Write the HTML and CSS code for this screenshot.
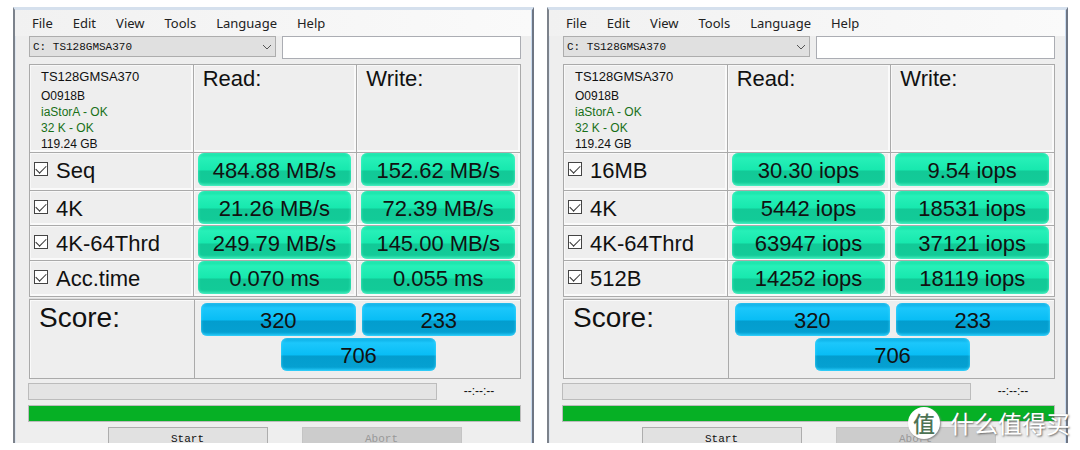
FILE: index.html
```html
<!DOCTYPE html>
<html lang="en">
<head>
<meta charset="utf-8">
<title>AS SSD Benchmark</title>
<link rel="stylesheet" href="styles.css">
</head>
<body>
<main class="screens">
  <section class="window">
    <nav class="menu">
      <button>File</button><button>Edit</button><button>View</button><button>Tools</button><button>Language</button><button>Help</button>
    </nav>
    <div class="content">
      <div class="toolbar">
        <div class="picker">
          <select aria-label="Drive"><option>C: TS128GMSA370</option></select>
          <svg viewBox="0 0 10 6"><path d="M1 1l4 4 4-4"/></svg>
        </div>
        <input class="note" type="text" aria-label="Note">
      </div>
      <table class="results">
        <thead>
          <tr>
            <td class="drive"><div class="model">TS128GMSA370</div><div>O0918B</div><div class="ok">iaStorA - OK</div><div class="ok">32 K - OK</div><div>119.24 GB</div></td>
            <th scope="col">Read:</th>
            <th scope="col">Write:</th>
          </tr>
        </thead>
        <tbody>
          <tr class="first"><td><label><input type="checkbox" checked>Seq</label></td><td><span class="pill">484.88 MB/s</span></td><td><span class="pill">152.62 MB/s</span></td></tr>
          <tr><td><label><input type="checkbox" checked>4K</label></td><td><span class="pill">21.26 MB/s</span></td><td><span class="pill">72.39 MB/s</span></td></tr>
          <tr><td><label><input type="checkbox" checked>4K-64Thrd</label></td><td><span class="pill">249.79 MB/s</span></td><td><span class="pill">145.00 MB/s</span></td></tr>
          <tr class="last"><td><label><input type="checkbox" checked>Acc.time</label></td><td><span class="pill">0.070 ms</span></td><td><span class="pill">0.055 ms</span></td></tr>
        </tbody>
      </table>
      <div class="score">
        <h2>Score:</h2>
        <div class="totals"><span class="pill blue">320</span><span class="pill blue">233</span><span class="pill blue overall">706</span></div>
      </div>
      <div class="timing"><progress value="0" max="100" aria-label="Test progress"></progress><span class="clock">--:--:--</span></div>
      <progress class="total" value="100" max="100" aria-label="Total progress"></progress>
      <div class="actions"><button>Start</button><button disabled>Abort</button></div>
    </div>
  </section>

  <section class="window">
    <nav class="menu">
      <button>File</button><button>Edit</button><button>View</button><button>Tools</button><button>Language</button><button>Help</button>
    </nav>
    <div class="content">
      <div class="toolbar">
        <div class="picker">
          <select aria-label="Drive"><option>C: TS128GMSA370</option></select>
          <svg viewBox="0 0 10 6"><path d="M1 1l4 4 4-4"/></svg>
        </div>
        <input class="note" type="text" aria-label="Note">
      </div>
      <table class="results">
        <thead>
          <tr>
            <td class="drive"><div class="model">TS128GMSA370</div><div>O0918B</div><div class="ok">iaStorA - OK</div><div class="ok">32 K - OK</div><div>119.24 GB</div></td>
            <th scope="col">Read:</th>
            <th scope="col">Write:</th>
          </tr>
        </thead>
        <tbody>
          <tr class="first"><td><label><input type="checkbox" checked>16MB</label></td><td><span class="pill">30.30 iops</span></td><td><span class="pill">9.54 iops</span></td></tr>
          <tr><td><label><input type="checkbox" checked>4K</label></td><td><span class="pill">5442 iops</span></td><td><span class="pill">18531 iops</span></td></tr>
          <tr><td><label><input type="checkbox" checked>4K-64Thrd</label></td><td><span class="pill">63947 iops</span></td><td><span class="pill">37121 iops</span></td></tr>
          <tr class="last"><td><label><input type="checkbox" checked>512B</label></td><td><span class="pill">14252 iops</span></td><td><span class="pill">18119 iops</span></td></tr>
        </tbody>
      </table>
      <div class="score">
        <h2>Score:</h2>
        <div class="totals"><span class="pill blue">320</span><span class="pill blue">233</span><span class="pill blue overall">706</span></div>
      </div>
      <div class="timing"><progress value="0" max="100" aria-label="Test progress"></progress><span class="clock">--:--:--</span></div>
      <progress class="total" value="100" max="100" aria-label="Total progress"></progress>
      <div class="actions"><button>Start</button><button disabled>Abort</button></div>
    </div>
  </section>
  <div class="watermark" lang="zh-CN"><span class="badge">值</span><span>什么值得买</span></div>
</main>
</body>
</html>
```

FILE: styles.css
```css
* { box-sizing: border-box; }

body {
  margin: 0;
  background: #fff;
  color: #111;
  font-family: "Liberation Sans", Arial, sans-serif;
}

.screens {
  position: relative;
  display: grid;
  grid-template-columns: 1fr 1fr;
  gap: 13px;
  padding: 7px 12px 8px 13px;
}

.window {
  min-width: 0;
  background: #eee;
  border-top: 3px solid #d5e0ed;
  border-left: 2px solid #7c828b;
  border-right: 2px solid #6e7684;
  box-shadow: inset -1px 0 #cbdcf0, inset 1px 0 #dfe6ef;
}

.menu {
  display: flex;
  gap: 20px;
  height: 26px;
  margin-right: 1px;
  padding-left: 17px;
  background: linear-gradient(to right, #f1f1f1, #fafafa);
}

.menu button {
  padding: 0;
  border: 0;
  background: none;
  color: #222;
  font: 13px/26px "Noto Sans", "Open Sans", sans-serif;
}

.content { padding: 0 11px 0 13px; }

.toolbar {
  display: flex;
  align-items: flex-start;
  gap: 6px;
  padding-left: 1px;
}

.picker { position: relative; flex: 248; }

.picker select {
  display: block;
  width: 100%;
  height: 21px;
  padding: 0 3px;
  border: 1px solid #adadad;
  border-radius: 0;
  appearance: none;
  background: #e0e0e0;
  color: #111;
  font: 11px "Liberation Mono", monospace;
}

.picker svg {
  position: absolute;
  right: 4px;
  top: 8px;
  width: 10px;
  height: 6px;
  fill: none;
  stroke: #555;
  pointer-events: none;
}

.note {
  flex: 238;
  min-width: 0;
  height: 23px;
  padding: 0;
  border: 1px solid #abadb3;
  background: #fff;
}

.results {
  width: calc(100% - 1px);
  margin: 5px 0 0 1px;
  table-layout: fixed;
  border-collapse: separate;
  border-spacing: 0;
  border-right: 1px solid #aaa;
  border-bottom: 1px solid #aaa;
}

.results td, .results th {
  height: 35px;
  padding: 0;
  border-top: 1px solid #aaa;
  border-left: 1px solid #aaa;
  box-shadow: inset 1px 1px #f8f8f8, inset -2px -2px #fafafa;
  vertical-align: top;
}

.results thead td, .results th { height: 87px; }
.results .first td { height: 38px; }
.results .last td { height: 36px; }

.results th {
  padding: 1px 0 0 9px;
  font-size: 22px;
  font-weight: 400;
  line-height: 26px;
  text-align: left;
}

.results .drive {
  padding: 4px 0 0 11px;
  font-size: 12px;
  line-height: 15px;
}

.drive div { line-height: 16px; }

.drive .model {
  padding-bottom: 3px;
  font-size: 13px;
}

.ok { color: #187018; }

.results label {
  display: flex;
  align-items: center;
  gap: 8px;
  height: 34px;
  padding: 1px 0 0 4px;
  font-size: 22px;
  line-height: 34px;
}

.results input {
  display: grid;
  place-items: center;
  width: 14px;
  height: 14px;
  margin: 0 0 3px;
  border: 1px solid #444;
  appearance: none;
  background: #fff;
}

.results input:checked::before {
  content: "";
  width: 9px;
  height: 5px;
  margin-bottom: 3px;
  border: solid #333;
  border-width: 0 0 1px 1px;
  rotate: -45deg;
}

.pill {
  display: block;
  height: 33px;
  margin: 0 5px 0 4px;
  border-radius: 6px;
  background: linear-gradient(#12dfa4, #27f0b8 15%, #17e8ae 52%, #12c997 54%, #12cb98 88%, #3ee8b7);
  box-shadow: inset 0 0 3px #52f7cb;
  font-size: 22px;
  line-height: 36px;
  text-align: center;
}

.pill.blue {
  margin: 0;
  background: linear-gradient(#09a8df, #1cc7fb 15%, #08bdf5 52%, #039dce 54%, #05a0d1 88%, #22c8f8);
  box-shadow: inset 0 0 3px #4bd9ff;
}

.score {
  display: grid;
  grid-template-columns: 164px 1fr;
  height: 80px;
  margin: 2px 0 0 1px;
  border: 1px solid #aaa;
  box-shadow: inset 1px 1px #fafafa, 0 -1px #ddd;
}

.score h2 {
  margin: 0;
  padding: 1px 0 0 9px;
  font-size: 28px;
  font-weight: 400;
  line-height: 34px;
}

.totals {
  display: grid;
  grid-template-columns: 1fr 1fr;
  align-content: start;
  gap: 2px 6px;
  padding: 3px 4px 0 6px;
  border-left: 1px solid #aaa;
}

.totals .overall {
  grid-column: 1 / -1;
  justify-self: center;
  width: 49%;
}

progress {
  display: block;
  width: 100%;
  height: 17px;
  border: 1px solid #bcbcbc;
  appearance: none;
  background: #e4e4e4;
}

progress::-webkit-progress-bar { background: #e4e4e4; }
progress::-webkit-progress-value { background: #06b025; }
progress::-moz-progress-bar { background: #06b025; }

.timing {
  display: grid;
  grid-template-columns: 1fr 84px;
  padding-top: 4px;
}

.clock {
  font-size: 12px;
  line-height: 17px;
  text-align: center;
}

.total { margin-top: 5px; }

.actions {
  display: grid;
  grid-template-columns: 160px 160px;
  justify-content: center;
  gap: 34px;
  height: 21px;
  padding: 5px 0 0 20px;
  overflow: hidden;
}

.actions button {
  height: 23px;
  padding: 0;
  border: 1px solid #adadad;
  background: #e1e1e1;
  color: #111;
  font: 11px/18px "Liberation Mono", monospace;
}

.actions button:disabled {
  border-color: #c4c4c4;
  background: #ccc;
  color: #999;
}

.watermark {
  position: absolute;
  right: 10px;
  bottom: 11px;
  display: flex;
  align-items: center;
  gap: 10px;
  color: #fff;
  font: 24px/34px "Noto Sans CJK SC", sans-serif;
  text-shadow: 1px 1px 2px #666;
}

.badge {
  width: 32px;
  height: 32px;
  border-radius: 50%;
  background: #fff;
  box-shadow: 1px 1px 2px #888;
  color: #4d7355;
  font-size: 22px;
  font-weight: 500;
  line-height: 30px;
  text-align: center;
  text-shadow: none;
}
```
